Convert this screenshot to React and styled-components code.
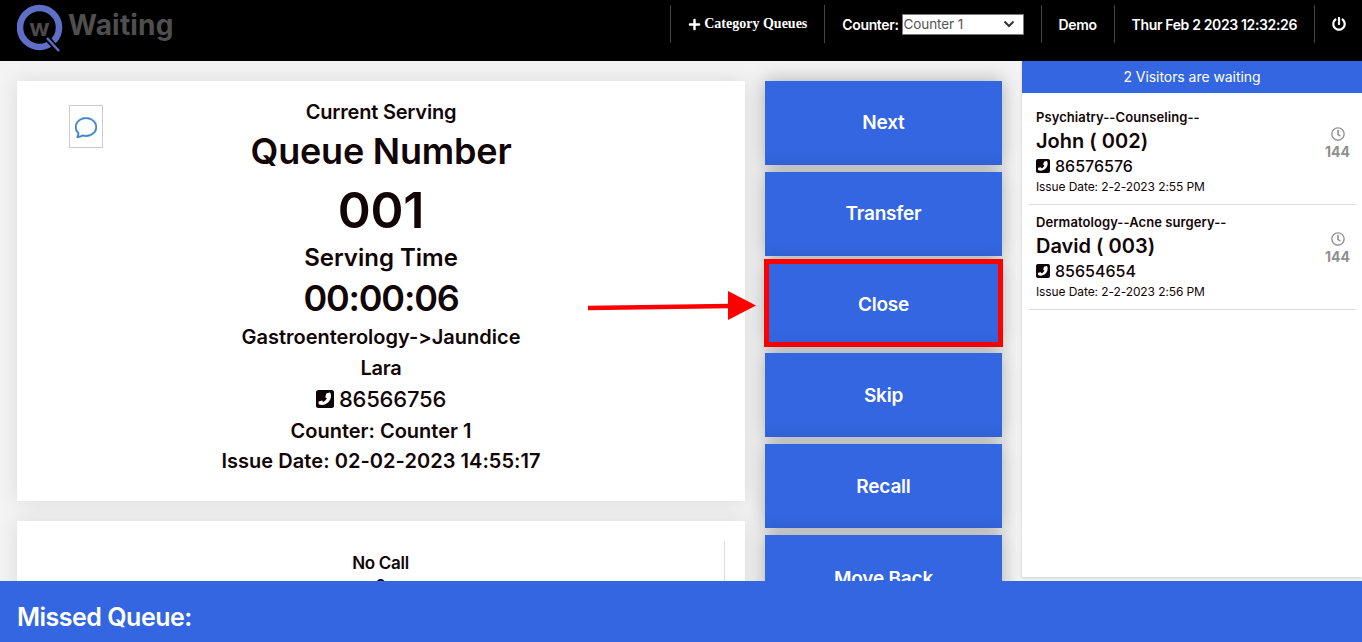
import React from 'react'
import styled, { createGlobalStyle } from 'styled-components'
import { BsChat } from 'react-icons/bs'
import { FaPlus, FaPowerOff, FaRegClock } from 'react-icons/fa'

const blue = '#3366e0'

const GlobalStyle = createGlobalStyle`
  html, body { margin: 0; padding: 0; height: 100%; overflow: hidden; }
  body {
    font-family: Inter, "Liberation Sans", sans-serif;
    font-variant-ligatures: none;
    font-feature-settings: "calt" 0;
    background: #f3f3f3;
    color: #120508;
  }
  * { box-sizing: border-box; }
`

const visitors = [
  { id: 1, title: 'Psychiatry--Counseling--', name: 'John ( 002)', phone: '86576576', date: '2-2-2023 2:55 PM', wait: 144 },
  { id: 2, title: 'Dermatology--Acne surgery--', name: 'David ( 003)', phone: '85654654', date: '2-2-2023 2:56 PM', wait: 144 },
]

const actions = ['Next', 'Transfer', 'Close', 'Skip', 'Recall', 'Move Back']

const chevron = encodeURIComponent(
  '<svg xmlns="http://www.w3.org/2000/svg" width="12" height="8" viewBox="0 0 12 8"><path d="M1.5 1.5L6 6l4.5-4.5" fill="none" stroke="#333" stroke-width="2"/></svg>'
)

const PhoneIcon = ({ size }) => (
  <svg width={size} height={size} viewBox="0 0 18 18" style={{ flex: 'none' }}>
    <rect width="18" height="18" rx="2.5" fill="#0d0408" />
    <path d="M13.6 2.6c.5 0 .9.3 1 .8l.4 2.4c0 4.8-4 9.2-9.2 9.2l-2.4-.4c-.5-.1-.8-.5-.8-1v-2.2l3.6-.9.9 1.5c1.7-.8 3-2.2 3.7-3.8l-1.5-.9.9-3.7z" fill="#fff" />
  </svg>
)

const Logo = () => (
  <svg width="46" height="52" viewBox="0 0 46 52" style={{ flex: 'none' }}>
    <circle cx="22.5" cy="27.5" r="19.5" fill="none" stroke="#5f6fc8" strokeWidth="6.5" />
    <path d="M29 37l13 14" stroke="#000" strokeWidth="6" />
    <path d="M30 38l12 13" stroke="#5f6fc8" strokeWidth="2.5" />
    <text x="22.5" y="35.5" textAnchor="middle" fontSize="24" fontWeight="700" fontFamily="Inter, sans-serif" fill="#4a4a4a">w</text>
  </svg>
)

export default function App() {
  return (
    <Page>
      <GlobalStyle />
      <TopBar>
        <Brand>
          <Logo />
          <BrandName>Waiting</BrandName>
        </Brand>
        <Nav>
          <NavItem $serif>
            <FaPlus size={13} />
            Category Queues
          </NavItem>
          <NavItem>
            Counter:
            <CounterSelect defaultValue="Counter 1">
              <option>Counter 1</option>
              <option>Counter 2</option>
            </CounterSelect>
          </NavItem>
          <NavItem>Demo</NavItem>
          <NavItem>Thur Feb 2 2023 12:32:26</NavItem>
          <PowerItem>
            <FaPowerOff size={14} />
          </PowerItem>
        </Nav>
      </TopBar>

      <Main>
        <LeftColumn>
          <ServingCard>
            <ChatButton><BsChat size={22} stroke="currentColor" strokeWidth={0.4} /></ChatButton>
            <Line $size={20} $height={22}>Current Serving</Line>
            <Line $size={36} $height={56}>Queue Number</Line>
            <Line $size={50} $height={62}>001</Line>
            <Line $size={24} $height={34} $spacing={0}>Serving Time</Line>
            <Line $size={36} $height={46} $spacing={-1.2}>00:00:06</Line>
            <Line $size={20} $height={32} $spacing={0}>Gastroenterology-&gt;Jaundice</Line>
            <Line $size={20} $height={30}>Lara</Line>
            <Line $size={22} $height={32} $medium>
              <PhoneRow><PhoneIcon size={18} />86566756</PhoneRow>
            </Line>
            <Line $size={20} $height={30} $spacing={0}>Counter: Counter 1</Line>
            <Line $size={20} $height={30} $spacing={0.05}>Issue Date: 02-02-2023 14:55:17</Line>
          </ServingCard>
          <CallCard>
            <CallInner>
              <CallText>No Call</CallText>
              <CallText>0</CallText>
            </CallInner>
          </CallCard>
        </LeftColumn>

        <ActionColumn>
          {actions.map((a) => (
            <ActionButton key={a} $marked={a === 'Close'} $tall={a === 'Move Back'}>{a}</ActionButton>
          ))}
        </ActionColumn>

        <WaitPanel>
          <WaitHeader>2 Visitors are waiting</WaitHeader>
          <WaitList>
            {visitors.map((v) => (
              <WaitItem key={v.id}>
                <div>
                  <ItemTitle>{v.title}</ItemTitle>
                  <ItemName>{v.name}</ItemName>
                  <ItemPhone><PhoneIcon size={14} />{v.phone}</ItemPhone>
                  <ItemDate>Issue Date: {v.date}</ItemDate>
                </div>
                <WaitTime>
                  <FaRegClock size={14} />
                  <span>{v.wait}</span>
                </WaitTime>
              </WaitItem>
            ))}
          </WaitList>
        </WaitPanel>
      </Main>

      <Footer>Missed Queue:</Footer>

      {/* annotation drawn on top of the screenshot */}
      <Arrow width="172" height="34" viewBox="0 0 172 34">
        <path d="M0 19L142 17" stroke="#ff0000" strokeWidth="4.5" />
        <path d="M140 2L168 16.5L140 31z" fill="#ff0000" />
      </Arrow>
    </Page>
  )
}

const Page = styled.div`
  position: relative;
  height: 642px;
  display: flex;
  flex-direction: column;
  overflow: hidden;
`
const TopBar = styled.header`
  flex: none;
  height: 61px;
  background: #000;
  display: flex;
  justify-content: space-between;
  align-items: flex-start;
`
const Brand = styled.div`
  display: flex;
  align-items: flex-start;
  padding-left: 17px;
`
const BrandName = styled.span`
  font-size: 28px;
  line-height: 50px;
  font-weight: 700;
  color: #4f4f4f;
  margin-left: 5px;
  letter-spacing: .2px;
`
const Nav = styled.nav`
  display: flex;
  margin-top: 5px;
`
const NavItem = styled.div`
  height: 38px;
  display: flex;
  align-items: center;
  gap: 3px;
  padding: 0 17px;
  border-left: 1px solid #444;
  color: #fff;
  font-size: 14px;
  letter-spacing: ${(p) => (p.$serif ? '0' : '-.36px')};
  white-space: nowrap;
  font-family: ${(p) => (p.$serif ? '"Liberation Serif", serif' : 'inherit')};
  font-weight: ${(p) => (p.$serif ? 700 : 600)};
`
const PowerItem = styled(NavItem)`
  padding-right: 16px;
`
const CounterSelect = styled.select`
  appearance: none;
  width: 122px;
  height: 21px;
  padding: 0 0 0 1px;
  border: 1px solid #777;
  border-radius: 0;
  background: #fff url("data:image/svg+xml,${chevron}") no-repeat right 8px center;
  color: #555;
  font-family: Inter, sans-serif;
  font-size: 13.5px;
  font-weight: 400;
  letter-spacing: -.1px;
`
const Main = styled.main`
  flex: 1;
  min-height: 0;
  display: flex;
  align-items: flex-start;
  overflow: hidden;
`
const LeftColumn = styled.div`
  width: 728px;
  margin: 20px 0 0 17px;
  display: flex;
  flex-direction: column;
  gap: 20px;
  flex: none;
`
const ServingCard = styled.section`
  position: relative;
  height: 420px;
  padding-top: 20px;
  background: #fff;
  box-shadow: 0 0 20px rgba(0, 0, 0, .1);
  text-align: center;
`
const ChatButton = styled.div`
  position: absolute;
  left: 52px;
  top: 24px;
  width: 34px;
  height: 43px;
  display: flex;
  align-items: center;
  justify-content: center;
  border: 1px solid #ccc;
  color: #3a7fc4;
`
const Line = styled.div`
  font-size: ${(p) => p.$size}px;
  line-height: ${(p) => p.$height}px;
  font-weight: ${(p) => (p.$medium ? 500 : 600)};
  letter-spacing: ${(p) => p.$spacing ?? -0.2}px;
`
const PhoneRow = styled.span`
  display: inline-flex;
  align-items: center;
  gap: 5px;
`
const CallCard = styled.section`
  height: 200px;
  padding: 20px;
  background: #fff;
  box-shadow: 0 0 20px rgba(0, 0, 0, .1);
`
const CallInner = styled.div`
  height: 100%;
  padding-top: 10px;
  border-right: 1px solid #ddd;
  text-align: center;
`
const CallText = styled.div`
  font-size: 17px;
  line-height: 24px;
  font-weight: 600;
  letter-spacing: -.3px;
  & + & { margin-top: -1px; }
`
const ActionColumn = styled.div`
  width: 237px;
  margin: 20px 0 0 20px;
  flex: none;
  display: flex;
  flex-direction: column;
  gap: 7px;
`
const ActionButton = styled.div`
  position: relative;
  flex: none;
  height: ${(p) => (p.$tall ? '88px' : '83.8px')};
  display: flex;
  align-items: center;
  justify-content: center;
  background: ${blue};
  color: #fff;
  font-size: 19px;
  font-weight: 600;
  letter-spacing: -.2px;
  box-shadow: 0 0 18px rgba(0, 0, 0, .3);
  &::after {
    content: '';
    display: ${(p) => (p.$marked ? 'block' : 'none')};
    position: absolute;
    inset: -3.5px -1px -1px -1px;
    border: 5px solid #ff0000;
  }
`
const WaitPanel = styled.aside`
  width: 340px;
  height: 516px;
  margin-left: 20px;
  flex: none;
  background: #fff;
  box-shadow: 0 1px 3px rgba(0, 0, 0, .15);
`
const WaitHeader = styled.div`
  height: 32px;
  background: ${blue};
  color: #fff;
  font-size: 14px;
  line-height: 32px;
  text-align: center;
  letter-spacing: -.05px;
`
const WaitList = styled.div`
  padding: 7px 6px 0 7px;
`
const WaitItem = styled.div`
  height: 105px;
  padding: 9px 6px 0 7px;
  display: flex;
  justify-content: space-between;
  border-bottom: 1px solid #ddd;
`
const ItemTitle = styled.div`
  font-size: 13px;
  line-height: 16px;
  font-weight: 600;
  letter-spacing: .08px;
`
const ItemName = styled.div`
  font-size: 20px;
  line-height: 32px;
  font-weight: 600;
`
const ItemPhone = styled.div`
  display: flex;
  align-items: center;
  gap: 5px;
  font-size: 16px;
  line-height: 18px;
  font-weight: 500;
`
const ItemDate = styled.div`
  margin-top: 3px;
  font-size: 12px;
  line-height: 18px;
  letter-spacing: -.1px;
`
const WaitTime = styled.div`
  margin-top: 18px;
  display: flex;
  flex-direction: column;
  align-items: center;
  gap: 2px;
  color: #8f8f8f;
  font-size: 14px;
  font-weight: 700;
`
const Footer = styled.footer`
  flex: none;
  position: relative;
  height: 61px;
  padding-left: 17px;
  background: ${blue};
  color: #fff;
  font-size: 25px;
  line-height: 73px;
  font-weight: 600;
  letter-spacing: -.5px;
`
const Arrow = styled.svg`
  position: absolute;
  left: 588px;
  top: 289px;
`
